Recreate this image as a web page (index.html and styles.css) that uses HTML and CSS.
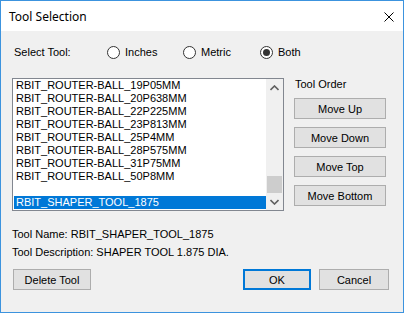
FILE: index.html
```html
<!DOCTYPE html>
<html>
<head>
	<meta charset="utf-8">
	<title>Tool Selection</title>
	<link rel="stylesheet" href="styles.css">
</head>
<body>
<div class="window">
	<div class="titlebar">
		<span class="title">Tool Selection</span>
		<svg class="close" width="10" height="10" viewBox="0 0 10 10">
			<path d="M0.5 0.5 L9.5 9.5 M9.5 0.5 L0.5 9.5" stroke="#000" stroke-width="1" fill="none"/>
		</svg>
	</div>
	<div class="content">
		<div class="select-row">
			<span class="select-label">Select Tool:</span>
			<label class="radio"><span class="circle"></span>Inches</label>
			<label class="radio"><span class="circle"></span>Metric</label>
			<label class="radio"><span class="circle checked"></span>Both</label>
		</div>
		<div class="main">
			<div class="listbox">
				<div class="items">
					<div class="item">RBIT_ROUTER-BALL_19P05MM</div>
					<div class="item">RBIT_ROUTER-BALL_20P638MM</div>
					<div class="item">RBIT_ROUTER-BALL_22P225MM</div>
					<div class="item">RBIT_ROUTER-BALL_23P813MM</div>
					<div class="item">RBIT_ROUTER-BALL_25P4MM</div>
					<div class="item">RBIT_ROUTER-BALL_28P575MM</div>
					<div class="item">RBIT_ROUTER-BALL_31P75MM</div>
					<div class="item">RBIT_ROUTER-BALL_50P8MM</div>
					<div class="item"></div>
					<div class="item selected">RBIT_SHAPER_TOOL_1875</div>
				</div>
				<div class="scrollbar">
					<div class="arrow">
						<svg width="9" height="6" viewBox="0 0 9 6"><path d="M0.5 5 L4.5 1 L8.5 5" stroke="#606060" stroke-width="1.6" fill="none"/></svg>
					</div>
					<div class="track"><div class="thumb"></div></div>
					<div class="arrow">
						<svg width="9" height="6" viewBox="0 0 9 6"><path d="M0.5 1 L4.5 5 L8.5 1" stroke="#606060" stroke-width="1.6" fill="none"/></svg>
					</div>
				</div>
			</div>
			<div class="side">
				<div class="side-label">Tool Order</div>
				<button class="btn side-btn">Move Up</button>
				<button class="btn side-btn">Move Down</button>
				<button class="btn side-btn">Move Top</button>
				<button class="btn side-btn">Move Bottom</button>
			</div>
		</div>
		<div class="info">
			<div class="info-line">Tool Name: RBIT_SHAPER_TOOL_1875</div>
			<div class="info-line">Tool Description: SHAPER TOOL 1.875 DIA.</div>
		</div>
		<div class="buttons">
			<button class="btn delete-btn">Delete Tool</button>
			<span class="spacer"></span>
			<button class="btn ok-btn">OK</button>
			<button class="btn cancel-btn">Cancel</button>
		</div>
	</div>
</div>
</body>
</html>
```

FILE: styles.css
```css
body {
	margin: 0;
	font-family: "Liberation Sans", Arial, sans-serif;
	font-size: 11px;
	color: #000;
}
.window {
	width: 404px;
	height: 313px;
	box-sizing: border-box;
	border: 1px solid #3c93de;
	background: #f0f0f0;
	display: flex;
	flex-direction: column;
}
.titlebar {
	height: 30px;
	background: #fff;
	display: flex;
	align-items: center;
	justify-content: space-between;
	padding: 0 9px 0 8px;
}
.title {
	font-family: "Noto Sans", sans-serif;
	font-size: 12px;
	margin-top: 1px;
}
.close {
	margin-top: 1px;
}
.select-row {
	display: flex;
	align-items: center;
	height: 13px;
	margin-top: 15px;
	padding-left: 13px;
	line-height: 13px;
}
.select-label {
	width: 93px;
}
.radio {
	display: flex;
	align-items: center;
	width: 76px;
	white-space: nowrap;
}
.radio:last-child {
	margin-left: 1px;
}
.circle {
	width: 11px;
	height: 11px;
	border: 1px solid #333;
	border-radius: 50%;
	background: #fff;
	margin-right: 5px;
	display: flex;
	align-items: center;
	justify-content: center;
}
.circle.checked::after {
	content: "";
	width: 7px;
	height: 7px;
	border-radius: 50%;
	background: #333;
}
.main {
	display: flex;
	height: 133px;
	margin-top: 19px;
	padding-left: 11px;
}
.listbox {
	width: 272px;
	height: 133px;
	box-sizing: border-box;
	border: 1px solid #828790;
	background: #fff;
	display: flex;
}
.items {
	flex: 1;
	padding-left: 1px;
	overflow: hidden;
}
.item {
	height: 13px;
	line-height: 13px;
	padding-left: 2px;
	white-space: nowrap;
}
.item.selected {
	background: #0078d7;
	color: #fff;
}
.scrollbar {
	width: 17px;
	background: #f0f0f0;
	display: flex;
	flex-direction: column;
}
.arrow {
	height: 17px;
	display: flex;
	align-items: center;
	justify-content: center;
}
.track {
	flex: 1;
	display: flex;
	flex-direction: column;
	justify-content: flex-end;
}
.thumb {
	height: 17px;
	margin: 0 1px;
	background: #cdcdcd;
}
.side {
	margin-left: 10px;
	display: flex;
	flex-direction: column;
	gap: 8px;
}
.side-label {
	padding-left: 1px;
	line-height: 13px;
	height: 12px;
}
.btn {
	font-family: "Liberation Sans", Arial, sans-serif;
	font-size: 11px;
	color: #000;
	background: #e1e1e1;
	border: 1px solid #adadad;
	padding: 0;
	height: 21px;
	box-sizing: border-box;
}
.side-btn {
	width: 92px;
}
.info {
	padding-left: 11px;
	margin-top: 17px;
}
.info-line {
	line-height: 13px;
	margin-bottom: 5px;
}
.buttons {
	display: flex;
	margin-top: 10px;
	padding: 0 14px 0 12px;
}
.spacer {
	flex: 1;
}
.delete-btn {
	width: 78px;
}
.ok-btn {
	width: 68px;
	border: 2px solid #0078d7;
	margin-right: 8px;
}
.cancel-btn {
	width: 70px;
}
```
